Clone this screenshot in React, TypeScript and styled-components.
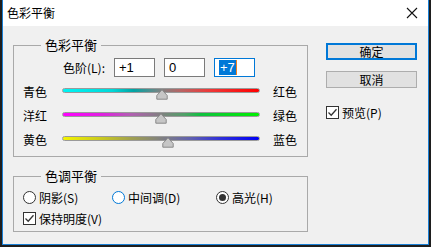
import React from 'react';
import styled, { createGlobalStyle } from 'styled-components';

const GlobalStyle = createGlobalStyle`
  html, body {
    margin: 0;
    padding: 0;
    background: #1e1e1e;
  }
  body {
    font-family: "Noto Sans CJK SC", "Noto Sans", sans-serif;
    font-size: 12px;
    color: #000;
  }
`;

const Window = styled.div`
  margin-left: 2px;
  width: 425px;
  height: 244px;
  border: 1px solid #1a7fd4;
  border-top: none;
  background: #f0f0f0;
  display: flex;
  flex-direction: column;
`;

const TitleBar = styled.div`
  height: 26px;
  background: #fff;
  display: flex;
  align-items: center;
  justify-content: space-between;
  padding: 0 10px 0 4px;
  font-size: 12px;
  line-height: 1;
`;

const CloseIcon = styled.svg`
  width: 12px;
  height: 12px;
`;

const Body = styled.div`
  flex: 1;
  display: flex;
  padding: 10px 0 0 10px;
  gap: 18px;
`;

const LeftColumn = styled.div`
  display: flex;
  flex-direction: column;
  gap: 10px;
`;

const Group = styled.fieldset<{ $height: number }>`
  width: 295px;
  height: ${p => p.$height}px;
  box-sizing: border-box;
  margin: 0;
  padding: 0 0 0 9px;
  border: 1px solid #a9a9a9;
  border-radius: 0;
`;

const Legend = styled.legend`
  margin-left: 18px;
  padding: 0 4px;
  font-size: 13px;
  line-height: 18px;
`;

const LevelsRow = styled.div`
  display: flex;
  align-items: center;
  padding-left: 40px;
  margin-top: 4px;
  height: 19px;
  gap: 9px;
  font-size: 12px;
`;

const Input = styled.div<{ $focused?: boolean }>`
  width: 41px;
  height: 19px;
  box-sizing: border-box;
  background: #fff;
  border: 1px solid ${p => (p.$focused ? '#0078d7' : '#7a7a7a')};
  display: flex;
  align-items: center;
  padding-left: 4px;
  font-family: "Liberation Sans", Arial, sans-serif;
  font-size: 13px;
`;

const Selected = styled.span`
  background: #0078d7;
  color: #fff;
  line-height: 15px;
  padding: 0 1px;
  border-right: 1px solid #f08020;
`;

const Sliders = styled.div`
  margin-top: 2px;
`;

const SliderRow = styled.div`
  display: flex;
  align-items: center;
  height: 24px;
  font-size: 12px;
  white-space: nowrap;
`;

const SideLabel = styled.span<{ $width: number }>`
  width: ${p => p.$width}px;
  flex-shrink: 0;
`;

const Track = styled.div<{ $gradient: string }>`
  position: relative;
  width: 198px;
  flex-shrink: 0;
  height: 5px;
  box-sizing: border-box;
  border: 1px solid #9a9a9a;
  border-radius: 3px;
  background: ${p => p.$gradient};
  margin: -1px 13px 0 0;
`;

const Thumb = styled.svg`
  position: absolute;
  top: 0px;
  width: 12px;
  height: 11px;
  transform: translateX(-6px);
`;

const RightColumn = styled.div`
  display: flex;
  flex-direction: column;
  padding-top: 7px;
`;

const Button = styled.div<{ $primary?: boolean }>`
  width: 91px;
  height: 17px;
  box-sizing: border-box;
  border: ${p => (p.$primary ? '2px solid #0078d7' : '1px solid #adadad')};
  background: #e1e1e1;
  display: flex;
  align-items: center;
  justify-content: center;
  font-size: 12px;
  margin-bottom: 11px;
`;

const CheckRow = styled.label<{ $offset?: number }>`
  display: flex;
  align-items: center;
  gap: 3px;
  font-size: 12px;
  height: 16px;
  margin-top: ${p => p.$offset ?? 0}px;
`;

const Box = styled.span`
  width: 13px;
  height: 13px;
  box-sizing: border-box;
  border: 1px solid #333;
  background: #fff;
  display: flex;
  align-items: center;
  justify-content: center;
`;

const RadioRow = styled.div`
  display: flex;
  align-items: center;
  height: 18px;
  margin-top: 3px;
`;

const RadioItem = styled.label<{ $width: number }>`
  display: flex;
  align-items: center;
  gap: 3px;
  width: ${p => p.$width}px;
`;

const RadioCircle = styled.span<{ $focused?: boolean; $checked?: boolean }>`
  width: 13px;
  height: 13px;
  box-sizing: border-box;
  border-radius: 50%;
  border: 1px solid ${p => (p.$focused ? '#0078d7' : '#333')};
  background: #fff;
  display: flex;
  align-items: center;
  justify-content: center;
  &::after {
    content: '';
    display: ${p => (p.$checked ? 'block' : 'none')};
    width: 7px;
    height: 7px;
    border-radius: 50%;
    background: #333;
  }
`;

const Check = () => (
  <Box>
    <svg width="11" height="11" viewBox="0 0 11 11">
      <path d="M1.5 5.5 L4.2 8.2 L9.5 2.2" fill="none" stroke="#333" strokeWidth="1.3" />
    </svg>
  </Box>
);

const sliders = [
  {
    left: '青色',
    right: '红色',
    value: 1,
    gradient:
      'linear-gradient(to right, #00f4f4 0%, #00d8d8 25%, #00a4a4 36%, #7e8282 50%, #b86464 60%, #ee3838 75%, #ff0000 100%)',
  },
  {
    left: '洋红',
    right: '绿色',
    value: 0,
    gradient:
      'linear-gradient(to right, #ff00ff 0%, #e020e0 20%, #b060b0 35%, #808080 50%, #50a068 62%, #10c040 70%, #00f000 100%)',
  },
  {
    left: '黄色',
    right: '蓝色',
    value: 7,
    gradient:
      'linear-gradient(to right, #f4f400 0%, #c8c820 20%, #a0a050 35%, #808080 50%, #6060b0 65%, #3030d8 80%, #0000f4 100%)',
  },
];

export default function App() {
  return (
    <>
      <GlobalStyle />
      <Window>
        <TitleBar>
          <span>色彩平衡</span>
          <CloseIcon viewBox="0 0 12 12">
            <path d="M1 1 L11 11 M11 1 L1 11" stroke="#111" strokeWidth="1.1" />
          </CloseIcon>
        </TitleBar>
        <Body>
          <LeftColumn>
            <Group $height={121}>
              <Legend>色彩平衡</Legend>
              <LevelsRow>
                <span>色阶(L):</span>
                <Input>+1</Input>
                <Input>0</Input>
                <Input $focused>
                  <Selected>+7</Selected>
                </Input>
              </LevelsRow>
              <Sliders>
                {sliders.map(s => (
                  <SliderRow key={s.left}>
                    <SideLabel $width={39}>{s.left}</SideLabel>
                    <Track $gradient={s.gradient}>
                      <Thumb
                        viewBox="0 0 12 11"
                        style={{ left: `${((s.value + 100) / 200) * 100}%` }}
                      >
                        <path
                          d="M6 0.8 L11.2 6.5 L11.2 10.2 L0.8 10.2 L0.8 6.5 Z"
                          fill="#c6c6c6"
                          stroke="#8a8a8a"
                          strokeWidth="1"
                          strokeLinejoin="round"
                        />
                      </Thumb>
                    </Track>
                    <SideLabel $width={26}>{s.right}</SideLabel>
                  </SliderRow>
                ))}
              </Sliders>
            </Group>
            <Group $height={65}>
              <Legend>色调平衡</Legend>
              <RadioRow>
                <RadioItem $width={89}>
                  <RadioCircle />
                  <span>阴影(S)</span>
                </RadioItem>
                <RadioItem $width={104}>
                  <RadioCircle $focused />
                  <span>中间调(D)</span>
                </RadioItem>
                <RadioItem $width={80}>
                  <RadioCircle $checked />
                  <span>高光(H)</span>
                </RadioItem>
              </RadioRow>
              <CheckRow $offset={4}>
                <Check />
                <span>保持明度(V)</span>
              </CheckRow>
            </Group>
          </LeftColumn>
          <RightColumn>
            <Button $primary>确定</Button>
            <Button>取消</Button>
            <CheckRow $offset={5}>
              <Check />
              <span>预览(P)</span>
            </CheckRow>
          </RightColumn>
        </Body>
      </Window>
    </>
  );
}
